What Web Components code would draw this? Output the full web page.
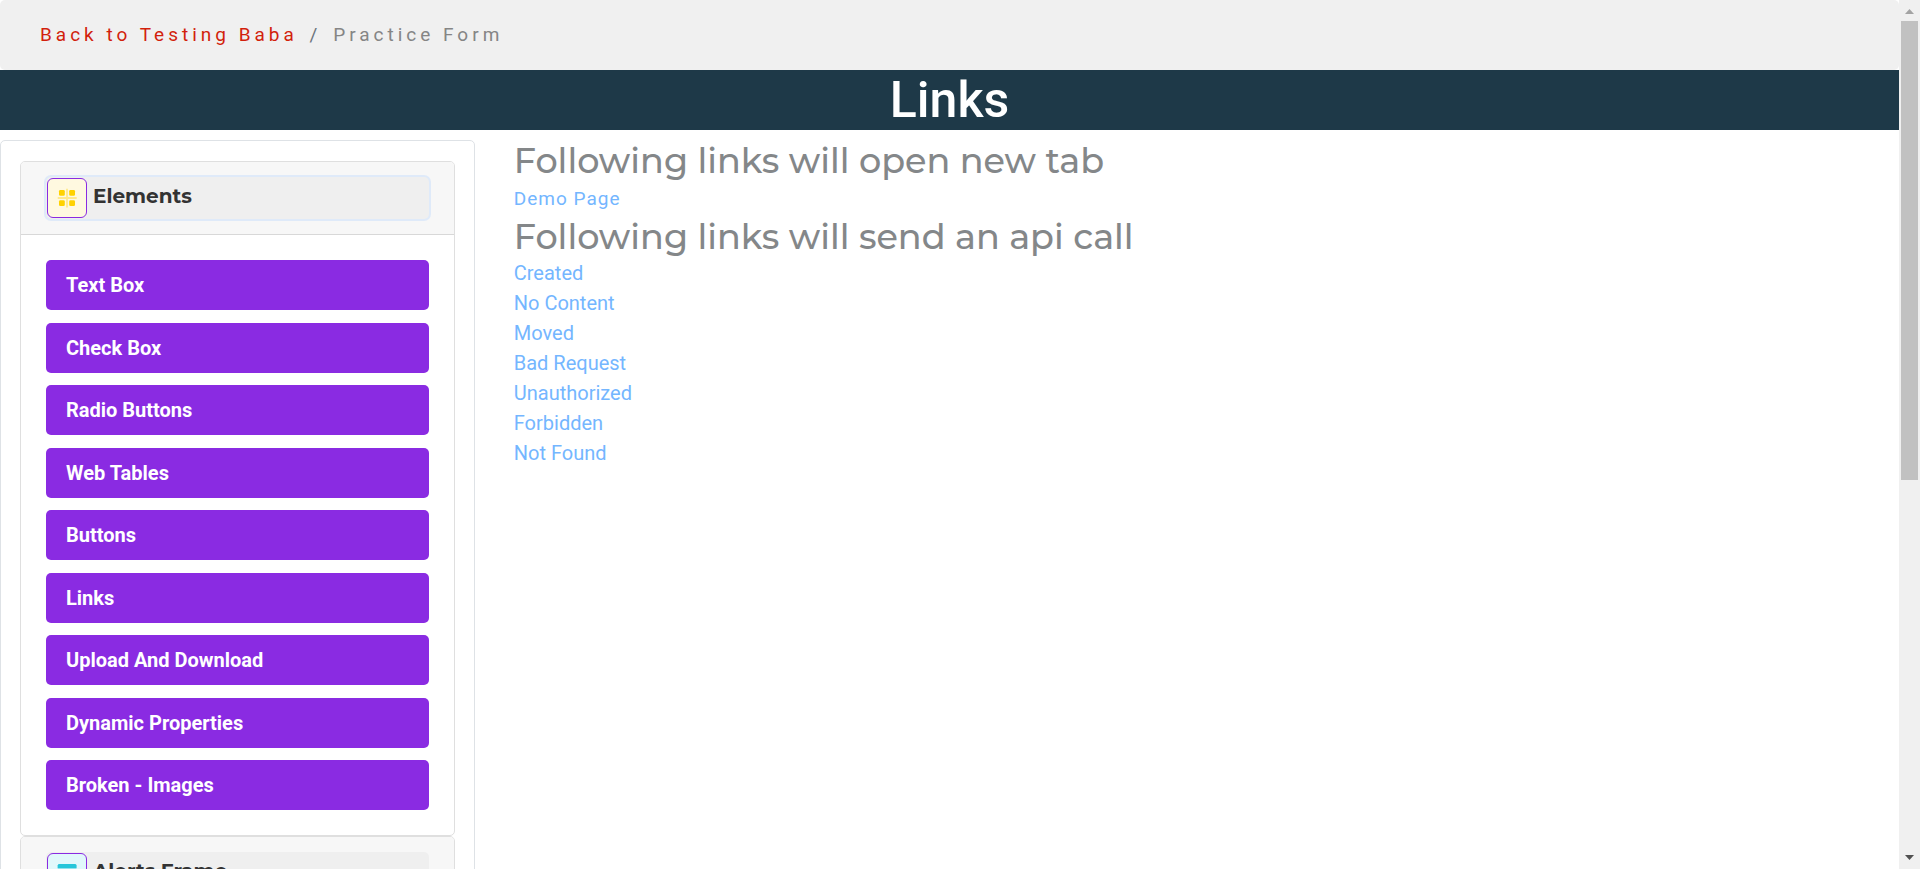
<!DOCTYPE html>
<html lang="en">
<head>
<meta charset="utf-8">
<title>Links</title>
<style>
body { margin: 0; font: 20px/30px Roboto, "Liberation Sans", sans-serif; color: #212529; background: #fff; }
</style>
</head>
<body>
<practice-page>
  <crumb-bar slot="top"></crumb-bar>
  <page-title slot="top">Links</page-title>
  <side-nav slot="side">
    <nav-group label="Elements" icon="grid" active>
      <nav-item>Text Box</nav-item>
      <nav-item>Check Box</nav-item>
      <nav-item>Radio Buttons</nav-item>
      <nav-item>Web Tables</nav-item>
      <nav-item>Buttons</nav-item>
      <nav-item>Links</nav-item>
      <nav-item>Upload And Download</nav-item>
      <nav-item>Dynamic Properties</nav-item>
      <nav-item>Broken - Images</nav-item>
    </nav-group>
    <nav-group label="Alerts Frame" icon="window"></nav-group>
  </side-nav>
  <links-panel></links-panel>
</practice-page>
<script>
function define(name, html, setup) {
  const template = document.createElement('template');
  template.innerHTML = html;
  customElements.define(name, class extends HTMLElement {
    constructor() {
      super();
      this.attachShadow({ mode: 'open' }).append(template.content.cloneNode(true));
    }
    connectedCallback() { if (setup) setup(this, this.shadowRoot); }
  });
}

define('scroll-rail', `
<style>
:host { display: grid; grid-template-rows: 21px minmax(0, 1fr) 21px; background: #f0f0f0; }
svg { display: block; width: 21px; height: 21px; }
.track { display: grid; grid-template-rows: 5fr 4fr; padding: 0 2px; }
.thumb { background: #c1c1c1; }
</style>
<svg viewBox="0 0 21 21" aria-hidden="true"><path d="M6 14L10.5 9L15 14Z" fill="#a3a3a3"/></svg>
<div class="track"><div class="thumb"></div></div>
<svg viewBox="0 0 21 21" aria-hidden="true"><path d="M6 7L10.5 12L15 7Z" fill="#505050"/></svg>
`);

define('practice-page', `
<style>
:host { display: grid; grid-template-columns: minmax(0, 1fr) 21px; height: 100vh; }
.view { overflow: hidden; }
.columns { display: grid; grid-template-columns: 25% minmax(0, 1fr); gap: 39px; margin-top: 10px; align-items: start; }
</style>
<div class="view">
  <slot name="top"></slot>
  <div class="columns"><slot name="side"></slot><main><slot></slot></main></div>
</div>
<scroll-rail></scroll-rail>
`);

define('crumb-bar', `
<style>
:host { display: block; padding: 20px 40px; background: #f0f0f0; border-radius: 5px; font-size: 19px; letter-spacing: 4px; color: #858585; }
a { color: #d21f0c; text-decoration: none; }
.sep { margin: 0 3px; color: #6c757d; }
</style>
<nav aria-label="Breadcrumb"><a href="#">Back to Testing Baba</a> <span class="sep">/</span> <span>Practice Form</span></nav>
`);

define('page-title', `
<style>
:host { display: block; background: #1e3948; color: #fff; }
h1 { margin: 0; font-size: 50px; line-height: 60px; font-weight: 500; text-align: center; }
</style>
<h1><slot></slot></h1>
`);

define('side-nav', `
<style>
:host { display: block; padding: 20px 19px; border: 1px solid #dee2e6; border-radius: 5px; }
</style>
<nav aria-label="Sections"><slot></slot></nav>
`);

define('group-icon', `
<style>
:host { display: block; width: 38px; height: 38px; border: 1px solid #8a2be2; border-radius: 6px; background: #fff9e0; overflow: hidden; }
:host([name="window"]) { background: #e1f8fb; }
svg { display: none; width: 38px; height: 38px; }
:host([name="grid"]) .grid, :host([name="window"]) .window { display: block; }
</style>
<svg class="grid" viewBox="1 1 38 38" aria-hidden="true">
  <path d="M20 10.7V29.5M10.7 20H29.7" stroke="#ffe98c" stroke-width="1.8"/>
  <g fill="#ffd200"><rect x="12" y="12" width="5.8" height="5.8" rx="1.3"/><rect x="22.2" y="12" width="5.8" height="5.8" rx="1.3"/><rect x="12" y="22.3" width="5.8" height="5.8" rx="1.3"/><rect x="22.2" y="22.3" width="5.8" height="5.8" rx="1.3"/></g>
</svg>
<svg class="window" viewBox="1 1 38 38" aria-hidden="true">
  <rect x="10.7" y="11" width="18.8" height="18" rx="1.5" fill="#93e3ed"/>
  <path d="M10.7 15V12.5Q10.7 11 12.2 11H28Q29.5 11 29.5 12.5V15Z" fill="#26c6da"/>
</svg>
`);

define('nav-group', `
<style>
:host { display: block; border: 1px solid #dfdfdf; border-radius: 5px; background: #fff; overflow: hidden; }
header { padding: 15px 25px; background: #f7f7f7; border-bottom: 1px solid #d8d8d8; }
button { display: flex; gap: 6px; width: 100%; margin: 0; padding: 1px; border: 0; border-radius: 5px; background: #efefef; color: #333; text-align: left; font: 700 20px/36px Montserrat, Inter, sans-serif; }
:host([active]) button { box-shadow: 0 0 0 2px #dfeaf9; }
ul { display: flex; flex-direction: column; justify-content: space-between; min-height: 550px; margin: 0; padding: 25px; list-style: none; }
:host(:not([active])) ul { display: none; }
</style>
<header><button type="button"><group-icon></group-icon><span></span></button></header>
<ul role="list"><slot></slot></ul>
`, (el, root) => {
  root.querySelector('span').textContent = el.getAttribute('label');
  root.querySelector('group-icon').setAttribute('name', el.getAttribute('icon'));
  root.querySelector('button').setAttribute('aria-expanded', el.hasAttribute('active'));
});

define('nav-item', `
<style>
:host { display: block; }
li { display: block; }
a { display: block; padding: 10px 20px; border-radius: 5px; background: #8a2be2; color: #fff; font-weight: 700; text-decoration: none; }
</style>
<li><a href="#"><slot></slot></a></li>
`);

define('links-panel', `
<style>
:host { display: block; }
h2 { margin: 0; font: 500 35px/42px Montserrat, Inter, sans-serif; color: #848789; }
a { color: #74b6ff; text-decoration: none; }
p { margin: 0; font-size: 19px; line-height: 34px; letter-spacing: 1px; }
ul { margin: 0; padding: 0; list-style: none; }
</style>
<h2>Following links will open new tab</h2>
<p><a href="#" target="_blank">Demo Page</a></p>
<h2>Following links will send an api call</h2>
<ul>
  <li><a href="#">Created</a></li>
  <li><a href="#">No Content</a></li>
  <li><a href="#">Moved</a></li>
  <li><a href="#">Bad Request</a></li>
  <li><a href="#">Unauthorized</a></li>
  <li><a href="#">Forbidden</a></li>
  <li><a href="#">Not Found</a></li>
</ul>
`);
</script>
</body>
</html>
